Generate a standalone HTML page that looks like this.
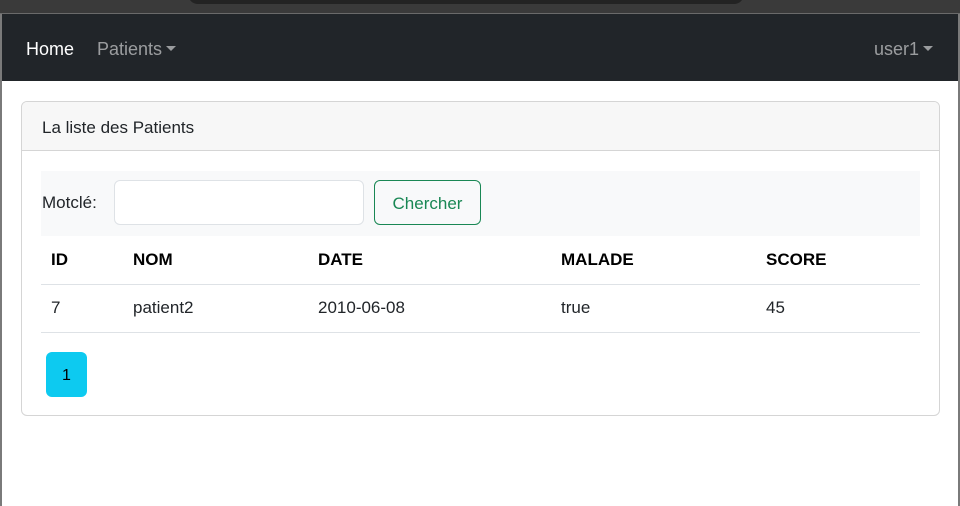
<!DOCTYPE html>
<html><head><meta charset="utf-8"><style>
*{box-sizing:border-box;margin:0;padding:0}
html,body{width:960px;height:506px;overflow:hidden;background:#fff;font-family:"Segoe UI","Liberation Sans",sans-serif;font-size:17px;color:#212529}
.chrome{position:absolute;left:0;top:0;width:960px;height:14px;background:#3a3a3a;border-bottom:1px solid #6a6a6a}
.chrome .pill{position:absolute;left:188px;top:-10px;width:556px;height:14px;background:#232323;border-radius:0 0 10px 10px}
.side{position:absolute;top:14px;bottom:0;width:2px;background:#7a7a7a}
nav{position:absolute;left:2px;top:14px;width:956px;height:67px;background:#212529}
nav span{position:absolute;top:25px;font-size:18px;color:rgba(255,255,255,.55)}
.caret{display:inline-block;width:0;height:0;border-left:5px solid transparent;border-right:5px solid transparent;border-top:5px solid rgba(255,255,255,.55);vertical-align:4px;margin-left:4px}
.card{position:absolute;left:21px;top:101px;width:919px;height:315px;border:1px solid #d5d5d5;border-radius:6px;overflow:hidden}
.ch{height:49px;background:#f7f7f7;border-bottom:1px solid #d5d5d5;padding:16px 20px 0;font-size:17px}
.search{position:absolute;left:19px;top:69px;width:879px;height:65px;background:#f8f9fa}
.search label{position:absolute;left:1px;top:22px}
.inp{position:absolute;left:73px;top:9px;width:250px;height:45px;border:1px solid #dee2e6;border-radius:6px;background:#fff}
.btn{position:absolute;left:333px;top:9px;width:107px;height:45px;border:1px solid #198754;border-radius:6px;color:#198754;text-align:center;line-height:45px}
table{position:absolute;left:19px;top:134px;width:879px;border-collapse:collapse}
th,td{text-align:left;padding:0 10px;height:48px;border-bottom:1px solid #dee2e6}
th{font-weight:bold;font-size:17px;color:#000}
.pg{position:absolute;left:24px;top:250px;width:41px;height:45px;background:#0dcaf0;border-radius:6px;text-align:center;line-height:47px;font-family:"Liberation Sans",sans-serif;font-size:16px;color:#000}
</style></head><body>
<div class="chrome"><div class="pill"></div></div>
<div class="side" style="left:0"></div><div class="side" style="right:0"></div>
<nav>
<span style="left:24px;color:#fff">Home</span>
<span style="left:95px">Patients<i class="caret"></i></span>
<span style="left:872px">user1<i class="caret"></i></span>
</nav>
<div class="card">
<div class="ch">La liste des Patients</div>
<div class="search"><label>Motclé:</label><div class="inp"></div><div class="btn">Chercher</div></div>
<table>
<tr><th style="width:82px">ID</th><th style="width:185px">NOM</th><th style="width:243px">DATE</th><th style="width:205px">MALADE</th><th>SCORE</th></tr>
<tr><td>7</td><td>patient2</td><td>2010-06-08</td><td>true</td><td>45</td></tr>
</table>
<div class="pg">1</div>
</div>
</body></html>
